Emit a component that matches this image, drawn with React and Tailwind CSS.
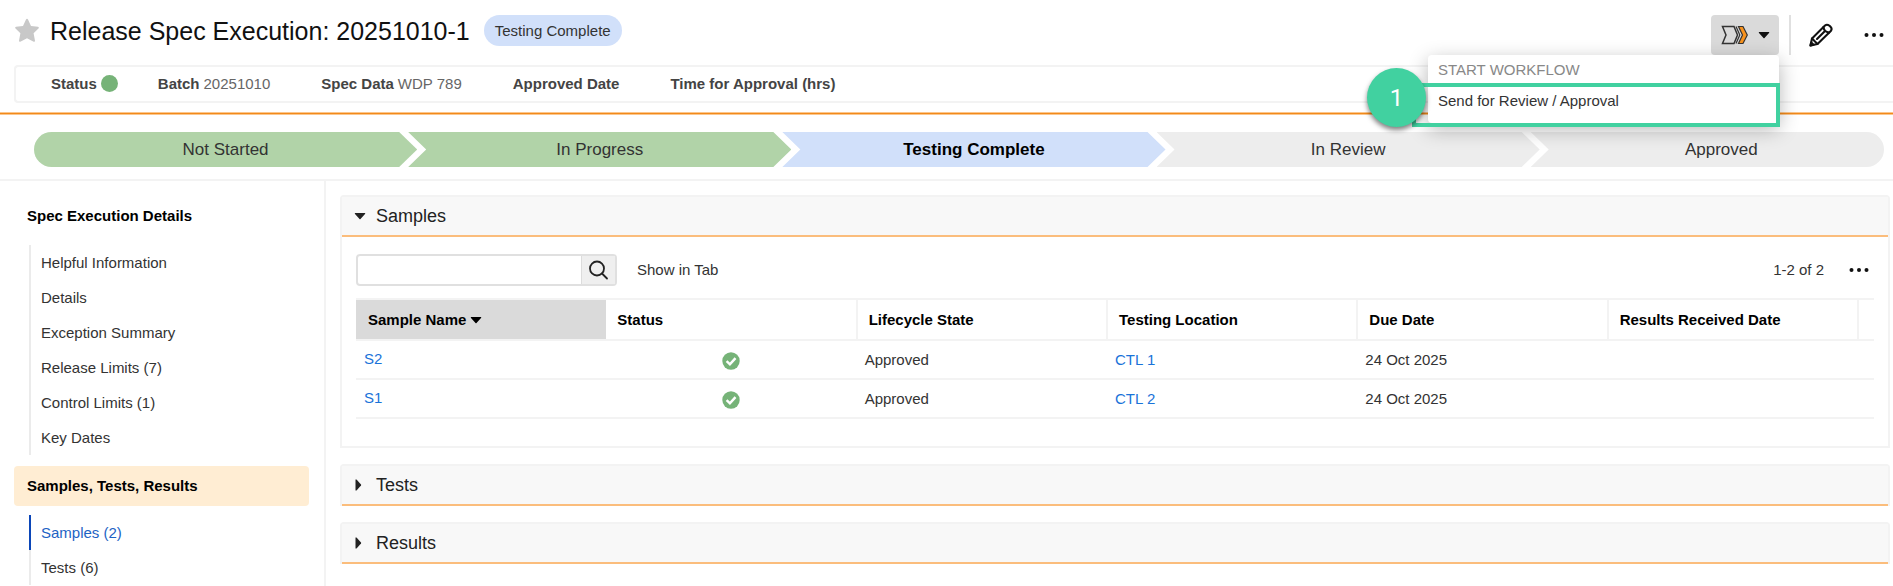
import React from "react";

const Caret = ({ dir = "down", className = "" }) => (
  <svg
    width={dir === "down" ? 12 : 8}
    height={dir === "down" ? 8 : 12}
    viewBox={dir === "down" ? "0 0 12 8" : "0 0 8 12"}
    fill="currentColor"
    className={className}
    aria-hidden="true"
  >
    <path d={dir === "down" ? "M1 1h10q.6.5 0 1L6.5 7q-.5.4-1 0L1 2q-.5-.6 0-1z" : "M1.5 .6q.5-.4 1 0L7 5.500q.4.5 0 1L2.500 11.400q-.5.4-1 0z"} />
  </svg>
);

const Dots = () => (
  <svg width="22" height="6" viewBox="0 0 22 6" fill="#111" aria-hidden="true">
    <circle cx="3.500" cy="3" r="2" />
    <circle cx="11" cy="3" r="2" />
    <circle cx="18.500" cy="3" r="2" />
  </svg>
);

const WorkflowIcon = () => (
  <svg width="28" height="20" viewBox="0 0 28 20" fill="none" stroke="#333" strokeWidth="1.500" aria-hidden="true">
    <path d="M1.500 1.500H13L16.500 10L13 18.500H1.500L5 10Z" />
    <path d="M15 1.500L18.800 10L15 18.500" strokeWidth="1.200" />
    <path d="M17.500 1.500H22L26.300 10L22 18.500H17.500L21.500 10Z" fill="#f7921e" strokeWidth="1.200" />
  </svg>
);

const PencilIcon = () => (
  <svg width="24" height="24" viewBox="0 0 24 24" fill="none" stroke="#111" strokeWidth="2.100" strokeLinejoin="round" strokeLinecap="round" aria-hidden="true">
    <path d="M1.500 22.500L3 15.500L16 2.500Q18 .8 20.500 2.800L21.500 3.800Q23.500 6 21.800 8L8.500 21Z" />
    <path d="M3 15.500L8.500 21M14.500 4Q15 8.800 20 9.500M8 16L15.500 8.500" />
    <path d="M1.500 22.500L2.200 19.500L4.500 21.800Z" fill="#111" />
  </svg>
);

const Check = () => (
  <svg width="18" height="18" viewBox="0 0 18 18" className="inline-block align-middle" role="img" aria-label="OK">
    <circle cx="9" cy="9" r="8.700" fill="#76b378" />
    <path d="M4.600 9.200L7.900 12.300L13.500 6.200" fill="none" stroke="#fff" strokeWidth="2.500" />
  </svg>
);

const stageShapes = {
  first: "rounded-l-full [clip-path:polygon(0_0,calc(100%-18px)_0,100%_50%,calc(100%-18px)_100%,0_100%)]",
  middle: "-ml-[9px] [clip-path:polygon(0_0,calc(100%-18px)_0,100%_50%,calc(100%-18px)_100%,0_100%,18px_50%)]",
  last: "-ml-[9px] rounded-r-full pl-7 [clip-path:polygon(0_0,100%_0,100%_100%,0_100%,18px_50%)]",
};

const stages = [
  { label: "Not Started", shape: "first", look: "grow-[384] bg-[#b1d3a8]" },
  { label: "In Progress", shape: "middle", look: "grow-[384] bg-[#b1d3a8]" },
  { label: "Testing Complete", shape: "middle", look: "grow-[384] bg-[#d1e0fa] font-bold text-black" },
  { label: "In Review", shape: "middle", look: "grow-[384] bg-[#ededed]" },
  { label: "Approved", shape: "last", look: "grow-[326] bg-[#ededed]" },
];

const detailLinks = ["Helpful Information", "Details", "Exception Summary", "Release Limits (7)", "Control Limits (1)", "Key Dates"];

const rows = [
  { name: "S2", state: "Approved", location: "CTL 1", due: "24 Oct 2025" },
  { name: "S1", state: "Approved", location: "CTL 2", due: "24 Oct 2025" },
];

const columns = ["Sample Name", "Status", "Lifecycle State", "Testing Location", "Due Date", "Results Received Date"];

function SectionHeader({ title, open }) {
  return (
    <h2 className="border-b-2 border-[#fbbd7c] bg-[#f8f8f8]">
      <button type="button" aria-expanded={open} className="flex h-[38px] w-full items-center pl-3 text-left text-lg text-[#222]">
        <span className="flex w-[22px]">
          <Caret dir={open ? "down" : "right"} />
        </span>
        {title}
      </button>
    </h2>
  );
}

function Field({ label, value }) {
  return (
    <div className="mr-[51px]">
      <dt className="inline font-bold text-[#444]">{label}</dt>
      {value && <dd className="ml-1 inline text-[#666]">{value}</dd>}
    </div>
  );
}

function WorkflowMenu() {
  return (
    <div className="relative">
      <button type="button" aria-label="Workflow actions" aria-expanded="true" className="flex h-10 w-[68px] items-center justify-between rounded bg-[#dadada] pr-[9px] pl-[10px] text-[#111]">
        <WorkflowIcon />
        <Caret />
      </button>
      <div className="absolute top-full right-0 z-10 h-[68px] w-[351px] rounded bg-white shadow-[0_6px_20px_rgba(0,0,0,0.3)]">
        <div className="px-[10px] pt-[5px] text-[#888]">START WORKFLOW</div>
        <button type="button" className="mt-[5px] block h-8 w-full px-[10px] text-left text-[#333]">
          Send for Review / Approval
        </button>
      </div>
      <div className="pointer-events-none absolute top-[68px] -right-px z-20 h-11 w-[368px] border-4 border-[#41d1a0]" />
      <div className="absolute top-[53px] right-[353px] z-30 flex size-[59px] items-center justify-center rounded-full bg-[#41d1a0] font-[Roboto,sans-serif] text-2xl text-white shadow-[0_3px_5px_rgba(0,0,0,0.5)]">
        1
      </div>
    </div>
  );
}

export default function App() {
  return (
    <div className="h-screen overflow-hidden bg-white font-['Liberation_Sans',Arial,sans-serif] text-[15px] leading-5 text-[#333]">
      <header>
        <div className="flex h-[65px] items-start pt-[15px] pl-[14px]">
          <button type="button" aria-label="Favorite" className="mt-[3px]">
            <svg width="26" height="25" viewBox="0 0 26 25" fill="#c8c8c8" aria-hidden="true">
              <path d="M13 .8Q13.700.8 14 1.500L17 8L24 8.800Q25.500 9.300 24.700 10.300L19.600 15.300L21 22.700Q21 24.200 19.700 23.700L13 20.300L6.300 23.700Q5 24.200 5 22.700L6.400 15.300L1.300 10.300Q.5 9.300 2 8.800L9 8L12 1.500Q12.300.8 13 .8Z" />
            </svg>
          </button>
          <h1 className="ml-[10px] text-[25px] leading-8 text-[#111]">Release Spec Execution: 20251010-1</h1>
          <span className="ml-[14px] flex h-[31px] items-center rounded-full bg-[#d1e0fa] px-[11px]">Testing Complete</span>
          <div className="ml-auto flex items-center">
            <WorkflowMenu />
            <div className="ml-[10px] h-10 w-[2px] bg-[#e0e0e0]" />
            <button type="button" aria-label="Edit" className="ml-[18px]"><PencilIcon /></button>
            <button type="button" aria-label="More actions" className="mr-2 ml-[30px]"><Dots /></button>
          </div>
        </div>
        <dl className="ml-[14px] flex h-[38px] items-center rounded-l border-2 border-r-0 border-[#f3f3f3] pl-[35px]">
          <div className="mr-10 flex items-center gap-1">
            <dt className="font-bold text-[#444]">Status</dt>
            <dd className="mb-[2px] size-[17px] rounded-full bg-[#76b378]" aria-label="Green" />
          </div>
          <Field label="Batch" value="20251010" />
          <Field label="Spec Data" value="WDP 789" />
          <Field label="Approved Date" />
          <Field label="Time for Approval (hrs)" />
        </dl>
        <div className="mt-[9px] h-[3px] border-y border-[#fbc68d] bg-[#f28a1a]" />
      </header>

      <ol className="flex border-b-2 border-[#f3f3f3] pt-[17px] pr-[9px] pb-3 pl-[34px] text-[17px]">
        {stages.map((s) => (
          <li key={s.label} className={`flex h-[35px] basis-0 items-center justify-center ${stageShapes[s.shape]} ${s.look}`}>
            {s.label}
          </li>
        ))}
      </ol>

      <div className="flex">
        <nav className="h-screen w-[326px] shrink-0 border-r-2 border-[#f3f3f3] pt-[15px] pr-[15px] pl-[14px]">
          <h2 className="flex h-10 items-center pl-[13px] font-bold text-black">Spec Execution Details</h2>
          <ul className="mt-[9px] ml-[15px] border-l-2 border-[#ebebeb]">
            {detailLinks.map((l) => (
              <li key={l}>
                <a href="#" className="flex h-[35px] items-center pl-[10px]">{l}</a>
              </li>
            ))}
          </ul>
          <h2 className="mt-[11px] flex h-10 items-center rounded-sm bg-[#ffedd3] pl-[13px] font-bold text-black">Samples, Tests, Results</h2>
          <ul className="mt-[9px] ml-[15px]">
            <li><a href="#" className="flex h-[35px] items-center border-l-2 border-[#0b46b8] pl-[10px] text-[#1d63c4]">Samples (2)</a></li>
            <li><a href="#" className="flex h-[35px] items-center border-l-2 border-[#ebebeb] pl-[10px]">Tests (6)</a></li>
          </ul>
        </nav>

        <main className="flex min-w-0 flex-1 flex-col gap-4 pt-[14px] pr-[3px] pl-[14px]">
          <section className="rounded-t border-2 border-[#f3f3f3]">
            <SectionHeader title="Samples" open />
            <div className="px-[14px] pt-[17px] pb-[27px]">
              <div className="flex h-8 items-center">
                <div className="flex h-8 w-[261px] rounded border-2 border-[#e0e0e0]">
                  <input type="text" aria-label="Search samples" className="min-w-0 flex-1 rounded-l px-2 outline-none" />
                  <button type="button" aria-label="Search" className="flex w-[34px] items-center justify-center border-l border-[#dcdcdc] bg-[#efefef]">
                    <svg width="20" height="20" viewBox="0 0 20 20" fill="none" stroke="#222" strokeWidth="1.800" strokeLinecap="round" aria-hidden="true">
                      <circle cx="8" cy="8.500" r="7" />
                      <path d="M13 13.500L18 18.500" />
                    </svg>
                  </button>
                </div>
                <a href="#" className="ml-5">Show in Tab</a>
                <span className="ml-auto">1-2 of 2</span>
                <button type="button" aria-label="Table options" className="mr-1 ml-6"><Dots /></button>
              </div>
              <table className="mt-3 w-full table-fixed border-collapse border-t-2 border-[#f3f3f3] text-left">
                <thead>
                  <tr className="h-[41px] border-b-2 border-[#f3f3f3] text-black">
                    {columns.map((c, i) => (
                      <th key={c} scope="col" aria-sort={i === 0 ? "descending" : undefined} className={i === 0 ? "bg-[#dadada] px-3 font-bold" : "border-r-2 border-[#f3f3f3] px-[11px] font-bold"}>
                        {i === 0 ? (
                          <button type="button" className="flex items-center gap-1 font-bold">{c}<Caret /></button>
                        ) : c}
                      </th>
                    ))}
                    <td className="w-4" />
                  </tr>
                </thead>
                <tbody>
                  {rows.map((r) => (
                    <tr key={r.name} className="h-[39px] border-b-2 border-[#f3f3f3]">
                      <td className="px-2 pb-[2px]"><a href="#" className="text-[#1a73d9]">{r.name}</a></td>
                      <td className="px-2 text-center"><Check /></td>
                      <td className="px-2">{r.state}</td>
                      <td className="px-2"><a href="#" className="text-[#1a73d9]">{r.location}</a></td>
                      <td className="px-2">{r.due}</td>
                      <td />
                      <td />
                    </tr>
                  ))}
                </tbody>
              </table>
            </div>
          </section>
          <section className="rounded-t border-x-2 border-t-2 border-[#f3f3f3]"><SectionHeader title="Tests" open={false} /></section>
          <section className="rounded-t border-x-2 border-t-2 border-[#f3f3f3]"><SectionHeader title="Results" open={false} /></section>
        </main>
      </div>
    </div>
  );
}
